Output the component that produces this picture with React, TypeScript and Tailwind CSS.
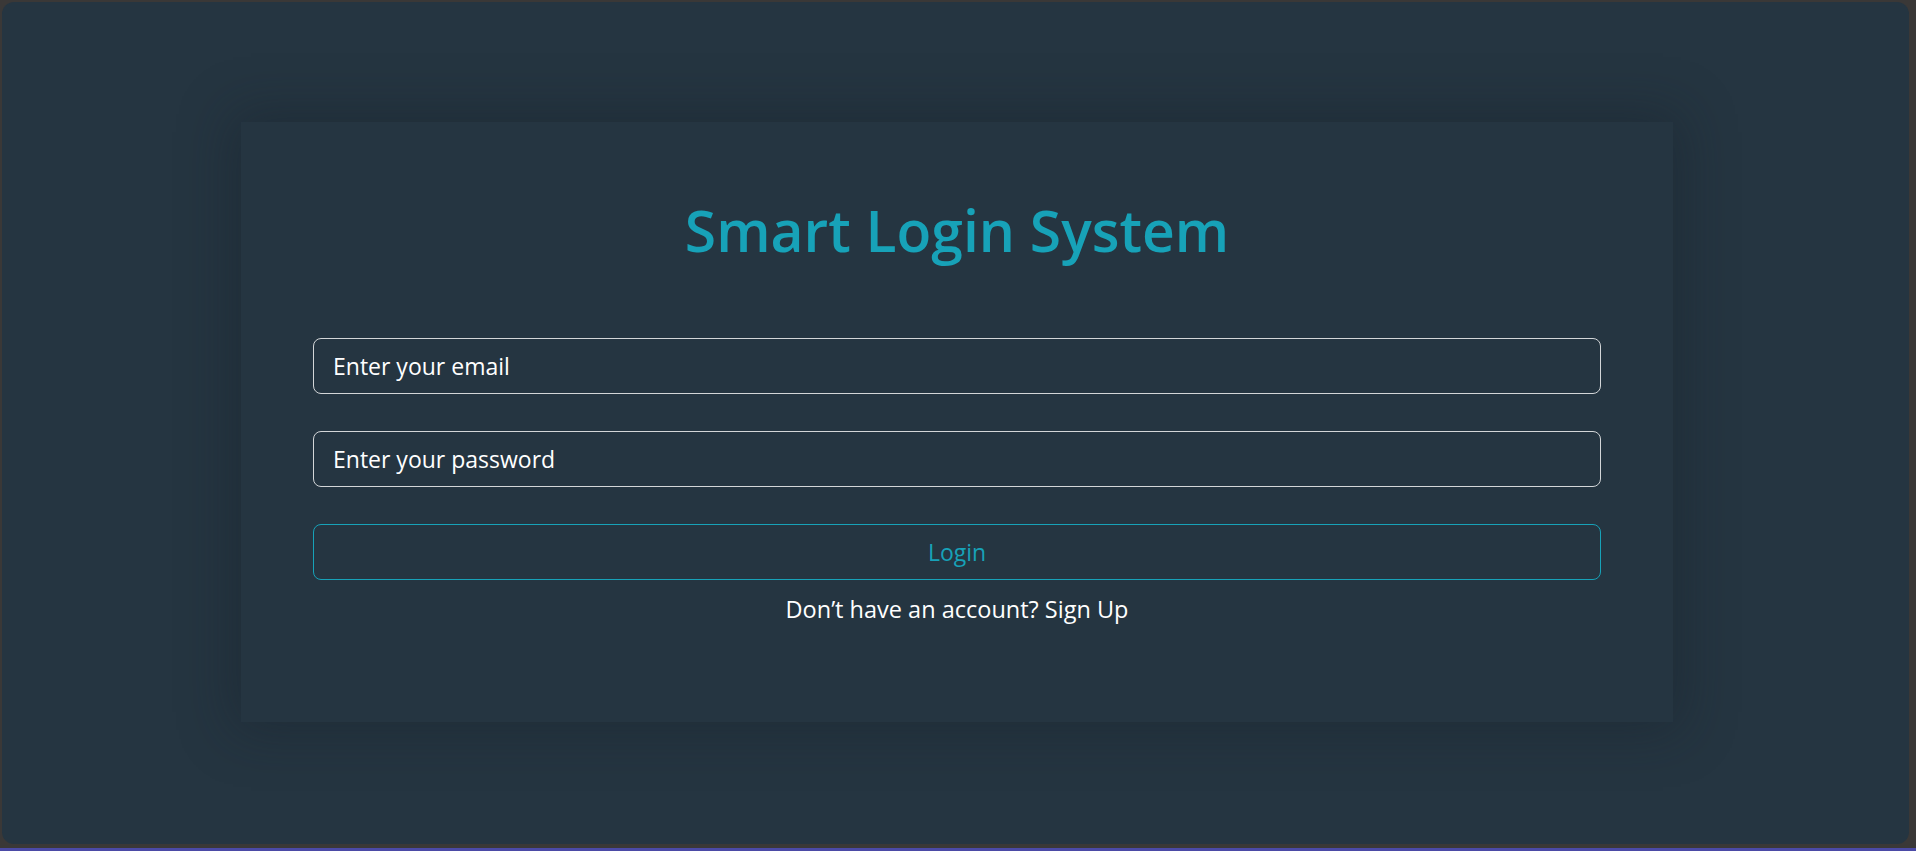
import React, { useState } from "react";

const App: React.FC = () => {
  const [email, setEmail] = useState("");
  const [password, setPassword] = useState("");

  return (
    <div className="h-[851px] w-full bg-[#3a3837] flex flex-col" style={{ fontFamily: '"Open Sans", "Noto Sans", sans-serif' }}>
      <div className="flex-1 pt-[2px] pl-[2px] pr-[7px] pb-[4px] flex">
        <div className="flex-1 rounded-[12px] bg-[#253541] pt-[120px] pl-[239px] pr-[236px]">
          <div className="bg-[#253541] shadow-[0_0_50px_8px_rgba(20,30,36,0.35)] px-[72px] pt-[72px] pb-[97px]">
            <h1 className="text-center text-[57px] leading-[72px] font-semibold text-[#17a2b8] mb-[72px]">
              Smart Login System
            </h1>

            <div className="flex flex-col gap-[37px]">
              <input
                type="email"
                value={email}
                onChange={(e) => setEmail(e.target.value)}
                placeholder="Enter your email"
                className="h-[56px] w-full rounded-[8px] border border-[#d3d6d8] bg-transparent px-[19px] text-[23px] text-white placeholder:text-white outline-none"
              />
              <input
                type="password"
                value={password}
                onChange={(e) => setPassword(e.target.value)}
                placeholder="Enter your password"
                className="h-[56px] w-full rounded-[8px] border border-[#d3d6d8] bg-transparent px-[19px] text-[23px] text-white placeholder:text-white outline-none"
              />
              <button className="h-[56px] w-full rounded-[8px] border border-[#17a2b8] bg-transparent text-[23px] text-[#17a2b8]">
                Login
              </button>
            </div>

            <p className="mt-[13px] text-center text-[23.5px] leading-[32px] text-white">
              Don’t have an account? Sign Up
            </p>
          </div>
        </div>
      </div>
      <div className="h-[3px] bg-[#4b4aa6]" />
    </div>
  );
};

export default App;
